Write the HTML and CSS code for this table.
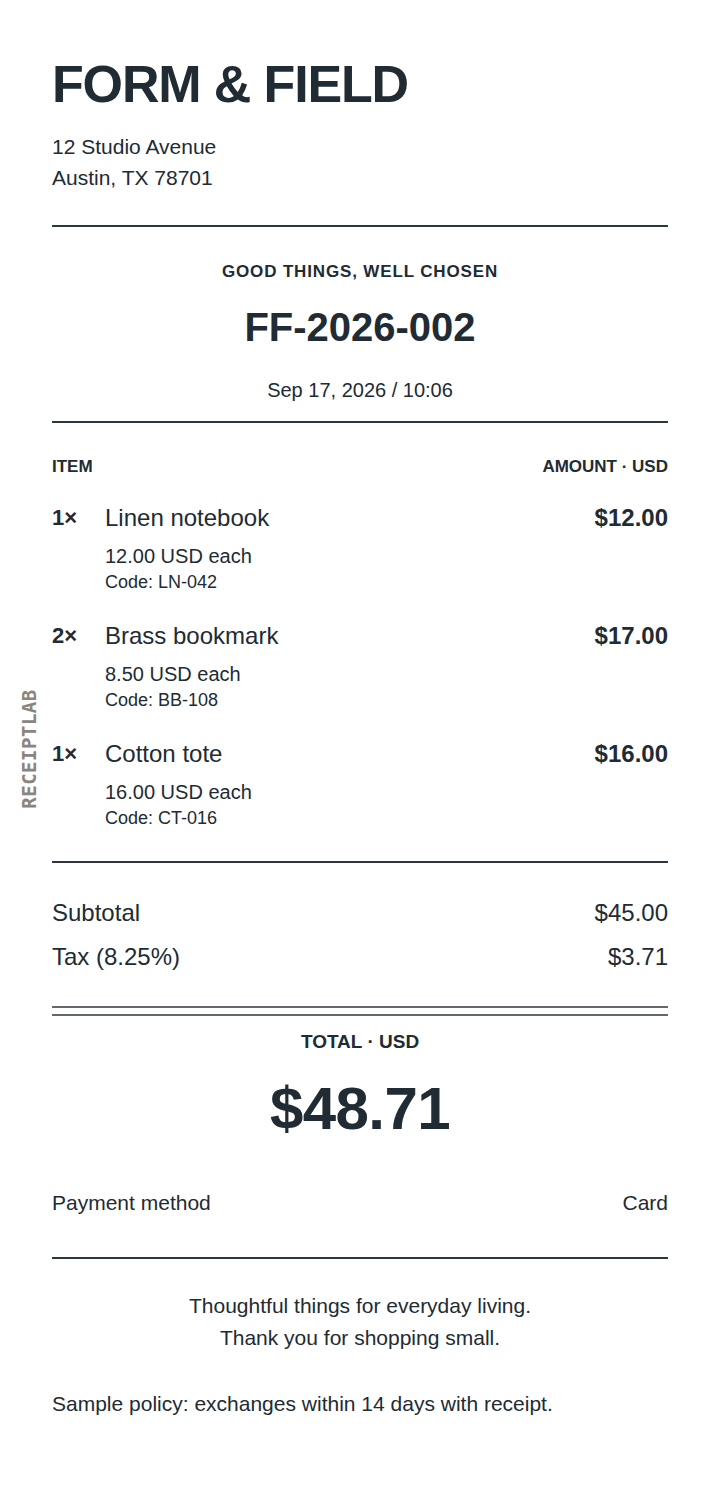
FILE: index.html
```html
<!DOCTYPE html>
<html lang="en">
<head>
    <meta charset="UTF-8">
    <meta name="viewport" content="width=device-width, initial-scale=1.0">
    <title>Form &amp; Field Receipt</title>
    <link rel="stylesheet" href="styles.css">
</head>
<body>
    <div class="brand-tab">RECEIPTLAB</div>

    <div class="receipt">
        <h1 class="store">FORM &amp; FIELD</h1>
        <p class="address">12 Studio Avenue<br>Austin, TX 78701</p>

        <hr class="rule">

        <div class="meta">
            <div class="tagline">GOOD THINGS, WELL CHOSEN</div>
            <div class="order-no">FF-2026-002</div>
            <div class="stamp">Sep 17, 2026 / 10:06</div>
        </div>

        <hr class="rule rule-meta">

        <div class="items-head">
            <span>ITEM</span>
            <span>AMOUNT · USD</span>
        </div>

        <div class="item">
            <div class="qty">1×</div>
            <div class="info">
                <div class="name">Linen notebook</div>
                <div class="each">12.00 USD each</div>
                <div class="code">Code: LN-042</div>
            </div>
            <div class="price">$12.00</div>
        </div>

        <div class="item">
            <div class="qty">2×</div>
            <div class="info">
                <div class="name">Brass bookmark</div>
                <div class="each">8.50 USD each</div>
                <div class="code">Code: BB-108</div>
            </div>
            <div class="price">$17.00</div>
        </div>

        <div class="item">
            <div class="qty">1×</div>
            <div class="info">
                <div class="name">Cotton tote</div>
                <div class="each">16.00 USD each</div>
                <div class="code">Code: CT-016</div>
            </div>
            <div class="price">$16.00</div>
        </div>

        <hr class="rule rule-items">

        <div class="sums">
            <div class="sum-row"><span>Subtotal</span><span>$45.00</span></div>
            <div class="sum-row"><span>Tax (8.25%)</span><span>$3.71</span></div>
        </div>

        <div class="double-rule"></div>

        <div class="total">
            <div class="total-label">TOTAL · USD</div>
            <div class="total-amount">$48.71</div>
        </div>

        <div class="pay-row"><span>Payment method</span><span>Card</span></div>

        <hr class="rule rule-pay">

        <p class="thanks">Thoughtful things for everyday living.<br>Thank you for shopping small.</p>

        <p class="policy">Sample policy: exchanges within 14 days with receipt.</p>
    </div>
</body>
</html>
```

FILE: styles.css
```css
body { margin: 0; padding: 0; background: #fff; color: #212b34; font-family: "Liberation Sans", Arial, sans-serif; }
.receipt { padding: 54px 52px 60px; }
p { margin: 0; }

.store { margin: 0; font-size: 52px; line-height: 60px; font-weight: bold; letter-spacing: -0.022em; }
.address { margin-top: 17px; font-size: 21px; line-height: 31px; }

.rule { border: none; border-top: 2px solid #2c363f; margin: 32px 0 0; }
.rule-meta { margin-top: 16px; }

.meta { text-align: center; padding-top: 33px; }
.tagline { font-size: 17px; line-height: 24px; font-weight: bold; letter-spacing: 0.05em; }
.order-no { margin-top: 19px; font-size: 40px; line-height: 48px; font-weight: bold; }
.stamp { margin-top: 24px; font-size: 20px; line-height: 30px; }

.items-head { display: flex; justify-content: space-between; margin-top: 32px; font-size: 17px; line-height: 24px; font-weight: bold; }

.item { display: flex; align-items: flex-start; margin-top: 23px; }
.item + .item { margin-top: 26px; }
.qty { width: 53px; font-size: 22px; line-height: 32px; font-weight: bold; }
.info { flex: 1; }
.name { font-size: 24px; line-height: 32px; }
.each { margin-top: 8px; font-size: 20px; line-height: 28px; }
.code { font-size: 18px; line-height: 24px; }
.price { font-size: 24px; line-height: 32px; font-weight: bold; }

.rule-items { margin-top: 31px; }

.sums { padding-top: 28px; }
.sum-row { display: flex; justify-content: space-between; font-size: 24px; line-height: 32px; padding: 6px 0; }

.double-rule { margin-top: 27px; height: 6px; border-top: 2px solid #62686e; border-bottom: 2px solid #62686e; }

.total { text-align: center; padding-top: 13px; }
.total-label { font-size: 19px; line-height: 26px; font-weight: bold; }
.total-amount { margin-top: 18px; font-size: 60px; line-height: 72px; font-weight: bold; letter-spacing: -0.01em; }

.pay-row { display: flex; justify-content: space-between; margin-top: 42px; font-size: 21px; line-height: 32px; }

.rule-pay { margin-top: 38px; }

.thanks { margin-top: 31px; text-align: center; font-size: 21px; line-height: 32px; }
.policy { margin-top: 34px; font-size: 21px; line-height: 32px; }

.brand-tab {
    position: absolute; left: 29px; top: 749px;
    transform: translate(-50%, -50%) rotate(-90deg);
    font-family: "DejaVu Sans Mono", monospace; font-weight: bold;
    font-size: 19px; letter-spacing: 0.5px; color: #8a867f; white-space: nowrap;
}
```
